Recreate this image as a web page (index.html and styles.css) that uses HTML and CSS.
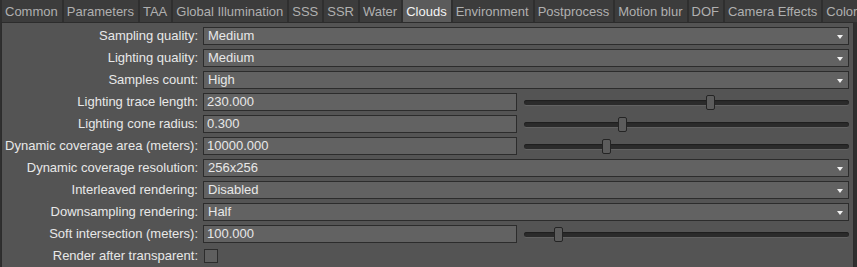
FILE: index.html
```html
<!DOCTYPE html>
<html lang="en">
    <head>
        <title>Render settings</title>
        <meta name="viewport" content="width=device-width, initial-scale=1">
        <link rel="stylesheet" href="styles.css">
    </head>
    <body>
        <nav class="tabs">
            <span class="tab">Common</span>
            <span class="tab">Parameters</span>
            <span class="tab">TAA</span>
            <span class="tab">Global Illumination</span>
            <span class="tab">SSS</span>
            <span class="tab">SSR</span>
            <span class="tab">Water</span>
            <span class="tab active">Clouds</span>
            <span class="tab">Environment</span>
            <span class="tab">Postprocess</span>
            <span class="tab">Motion blur</span>
            <span class="tab">DOF</span>
            <span class="tab">Camera Effects</span>
            <span class="tab">Color</span>
        </nav>
        <main class="panel">
            <label class="caption">Sampling quality:</label>
            <div class="combo"><span>Medium</span></div>

            <label class="caption">Lighting quality:</label>
            <div class="combo"><span>Medium</span></div>

            <label class="caption">Samples count:</label>
            <div class="combo"><span>High</span></div>

            <label class="caption">Lighting trace length:</label>
            <div class="slider-row">
                <input class="field" type="text" value="230.000" spellcheck="false">
                <input class="slider" type="range" min="0" max="1000" value="576">
            </div>

            <label class="caption">Lighting cone radius:</label>
            <div class="slider-row">
                <input class="field" type="text" value="0.300" spellcheck="false">
                <input class="slider" type="range" min="0" max="1000" value="298">
            </div>

            <label class="caption">Dynamic coverage area (meters):</label>
            <div class="slider-row">
                <input class="field" type="text" value="10000.000" spellcheck="false">
                <input class="slider" type="range" min="0" max="1000" value="248">
            </div>

            <label class="caption">Dynamic coverage resolution:</label>
            <div class="combo"><span>256x256</span></div>

            <label class="caption">Interleaved rendering:</label>
            <div class="combo"><span>Disabled</span></div>

            <label class="caption">Downsampling rendering:</label>
            <div class="combo"><span>Half</span></div>

            <label class="caption">Soft intersection (meters):</label>
            <div class="slider-row">
                <input class="field" type="text" value="100.000" spellcheck="false">
                <input class="slider" type="range" min="0" max="1000" value="96">
            </div>

            <label class="caption">Render after transparent:</label>
            <div><span class="check"></span></div>
        </main>
    </body>
</html>
```
FILE: styles.css
```css
:root {
    --color-bar: #2f2f2f;
    --color-tab: #3c3c3c;
    --color-tab-text: #b0b0b0;
    --color-tab-active: #5b5b5b;
    --color-panel: #545454;
    --color-field: #626262;
    --color-border: #2c2c2c;
    --color-text: #e8e8e8;
    --row-height: 18px;
    --row-gap: 4px;
}
* { padding: 0; margin: 0; box-sizing: border-box; }
html, body { height: 100%; }
body {
    display: flex; flex-flow: column;
    background-color: var(--color-bar);
    font-family: "Liberation Sans", Arial, sans-serif; font-size: 13px;
    color: var(--color-text);
}
/* tab strip */
.tabs { display: flex; gap: 2px; height: 22px; padding-left: 2px; overflow: hidden; white-space: nowrap; }
.tab {
    display: flex; align-items: center;
    padding: 0 4px 0 3px;
    background-color: var(--color-tab); color: var(--color-tab-text);
}
.tab.active { background-color: var(--color-tab-active); color: #f4f4f4; }
/* settings panel */
.panel {
    flex: auto;
    display: grid; grid-template-columns: 196px 1fr; grid-auto-rows: var(--row-height);
    column-gap: 5px; row-gap: var(--row-gap);
    margin: 0 3px 0 1px; padding: 4px 4px 0 0;
    background-color: var(--color-panel);
    border: solid 1px var(--color-border); border-bottom: none;
}
.caption { display: flex; align-items: center; justify-content: flex-end; white-space: nowrap; padding-bottom: 1px; }
.combo, .field {
    height: var(--row-height);
    background-color: var(--color-field);
    border: solid 1px var(--color-border);
    color: var(--color-text); font: inherit;
}
.combo { position: relative; display: flex; align-items: center; padding: 0 0 1px 4px; }
.combo::after {
    content: ""; position: absolute; right: 5px; top: 7px;
    border-left: 3.5px solid transparent; border-right: 3.5px solid transparent;
    border-top: 4px solid #f2f2f2;
}
.slider-row { display: flex; align-items: center; }
.field { width: 314px; padding: 0 0 1px 3px; outline: none; }
/* slider */
.slider {
    -webkit-appearance: none; appearance: none;
    flex: auto; height: var(--row-height); margin-left: 7px;
    background: transparent; outline: none;
}
.slider::-webkit-slider-runnable-track {
    height: 5px; border-radius: 3px;
    background-color: #2b2b2b;
    box-shadow: 0 1px 0 #626262, inset 0 1px 1px #1e1e1e;
}
.slider::-webkit-slider-thumb {
    -webkit-appearance: none; appearance: none;
    width: 9px; height: 15px; margin-top: -5px;
    background-color: #5c5c5c;
    border: solid 1px #242424; border-radius: 2px;
}
.check {
    display: block; width: 14px; height: 14px; margin: 2px 0 0 1px;
    background-color: #5f5f5f; border: solid 1px var(--color-border);
}
```
